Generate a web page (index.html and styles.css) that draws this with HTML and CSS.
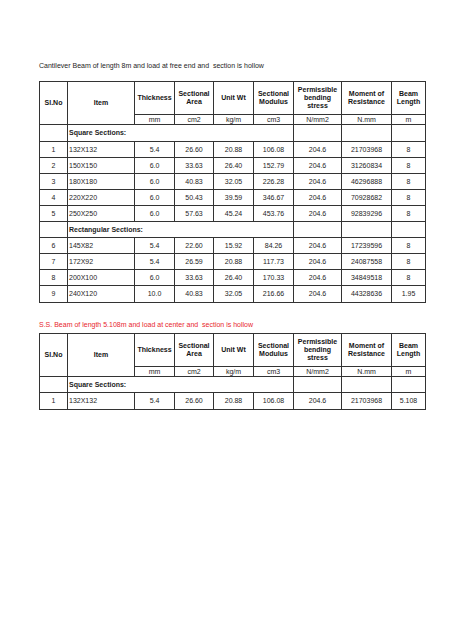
FILE: index.html
```html
<!DOCTYPE html>
<html>
<head>
<meta charset="utf-8">
<link rel="stylesheet" href="styles.css">
</head>
<body>
<div class="page">
  <p class="title">Cantilever Beam of length 8m and load at free end and &nbsp;section is hollow</p>
  <table class="grid">
    <colgroup>
      <col class="c-sl"><col class="c-item"><col class="c-th"><col class="c-area"><col class="c-wt"><col class="c-mod"><col class="c-str"><col class="c-mom"><col class="c-len">
    </colgroup>
    <tr class="head">
      <th rowspan="2">Sl.No</th>
      <th rowspan="2">Item</th>
      <th>Thickness</th>
      <th>Sectional<br>Area</th>
      <th>Unit Wt</th>
      <th>Sectional<br>Modulus</th>
      <th>Permissible<br>bending<br>stress</th>
      <th>Moment of<br>Resistance</th>
      <th>Beam<br>Length</th>
    </tr>
    <tr class="units">
      <td>mm</td><td>cm2</td><td>kg/m</td><td>cm3</td><td>N/mm2</td><td>N.mm</td><td>m</td>
    </tr>
    <tr class="sec tall">
      <td></td><td colspan="5" class="lbl">Square Sections:</td><td></td><td></td><td></td>
    </tr>
    <tr><td>1</td><td class="it">132X132</td><td>5.4</td><td>26.60</td><td>20.88</td><td>106.08</td><td>204.6</td><td>21703968</td><td>8</td></tr>
    <tr><td>2</td><td class="it">150X150</td><td>6.0</td><td>33.63</td><td>26.40</td><td>152.79</td><td>204.6</td><td>31260834</td><td>8</td></tr>
    <tr><td>3</td><td class="it">180X180</td><td>6.0</td><td>40.83</td><td>32.05</td><td>226.28</td><td>204.6</td><td>46296888</td><td>8</td></tr>
    <tr><td>4</td><td class="it">220X220</td><td>6.0</td><td>50.43</td><td>39.59</td><td>346.67</td><td>204.6</td><td>70928682</td><td>8</td></tr>
    <tr><td>5</td><td class="it">250X250</td><td>6.0</td><td>57.63</td><td>45.24</td><td>453.76</td><td>204.6</td><td>92839296</td><td>8</td></tr>
    <tr class="sec">
      <td></td><td colspan="5" class="lbl">Rectangular Sections:</td><td></td><td></td><td></td>
    </tr>
    <tr><td>6</td><td class="it">145X82</td><td>5.4</td><td>22.60</td><td>15.92</td><td>84.26</td><td>204.6</td><td>17239596</td><td>8</td></tr>
    <tr><td>7</td><td class="it">172X92</td><td>5.4</td><td>26.59</td><td>20.88</td><td>117.73</td><td>204.6</td><td>24087558</td><td>8</td></tr>
    <tr><td>8</td><td class="it">200X100</td><td>6.0</td><td>33.63</td><td>26.40</td><td>170.33</td><td>204.6</td><td>34849518</td><td>8</td></tr>
    <tr class="tall"><td>9</td><td class="it">240X120</td><td>10.0</td><td>40.83</td><td>32.05</td><td>216.66</td><td>204.6</td><td>44328636</td><td>1.95</td></tr>
  </table>

  <p class="title red">S.S. Beam of length 5.108m and load at center and &nbsp;section is hollow</p>
  <table class="grid">
    <colgroup>
      <col class="c-sl"><col class="c-item"><col class="c-th"><col class="c-area"><col class="c-wt"><col class="c-mod"><col class="c-str"><col class="c-mom"><col class="c-len">
    </colgroup>
    <tr class="head">
      <th rowspan="2">Sl.No</th>
      <th rowspan="2">Item</th>
      <th>Thickness</th>
      <th>Sectional<br>Area</th>
      <th>Unit Wt</th>
      <th>Sectional<br>Modulus</th>
      <th>Permissible<br>bending<br>stress</th>
      <th>Moment of<br>Resistance</th>
      <th>Beam<br>Length</th>
    </tr>
    <tr class="units">
      <td>mm</td><td>cm2</td><td>kg/m</td><td>cm3</td><td>N/mm2</td><td>N.mm</td><td>m</td>
    </tr>
    <tr class="sec">
      <td></td><td colspan="5" class="lbl">Square Sections:</td><td></td><td></td><td></td>
    </tr>
    <tr class="tall"><td>1</td><td class="it">132X132</td><td>5.4</td><td>26.60</td><td>20.88</td><td>106.08</td><td>204.6</td><td>21703968</td><td>5.108</td></tr>
  </table>
</div>
</body>
</html>
```

FILE: styles.css
```css
html, body {
  margin: 0;
  padding: 0;
  background: #ffffff;
}

.page {
  padding: 62px 0 0 39px;
  font-family: "Liberation Sans", Arial, sans-serif;
  color: #1e1e1e;
}

.title {
  margin: 0 0 11px 0;
  font-size: 7px;
  line-height: 8px;
  white-space: pre;
}

.title.red {
  color: #e8262e;
  margin: 18px 0 4px 0;
}

.grid {
  border-collapse: collapse;
  table-layout: fixed;
  width: 387px;
  font-size: 7px;
  line-height: 8px;
}

.grid th,
.grid td {
  border: 1px solid #333333;
  padding: 0;
  text-align: center;
  vertical-align: middle;
  overflow: hidden;
  white-space: nowrap;
}

.c-sl { width: 28px; }
.c-item { width: 67px; }
.c-th { width: 40px; }
.c-area { width: 39px; }
.c-wt { width: 40px; }
.c-mod { width: 40px; }
.c-str { width: 48px; }
.c-mom { width: 50px; }
.c-len { width: 34px; }

.grid th {
  font-weight: bold;
  color: #141414;
}

.head th {
  height: 32px;
}

.grid tr td {
  height: 15px;
}

.grid tr.tall td {
  height: 16px;
}

.grid tr.units td {
  height: 9px;
  line-height: 8px;
}

.lbl {
  text-align: left !important;
  font-weight: bold;
  padding-left: 1px !important;
}

.it {
  text-align: left !important;
  padding-left: 1px !important;
}
```
